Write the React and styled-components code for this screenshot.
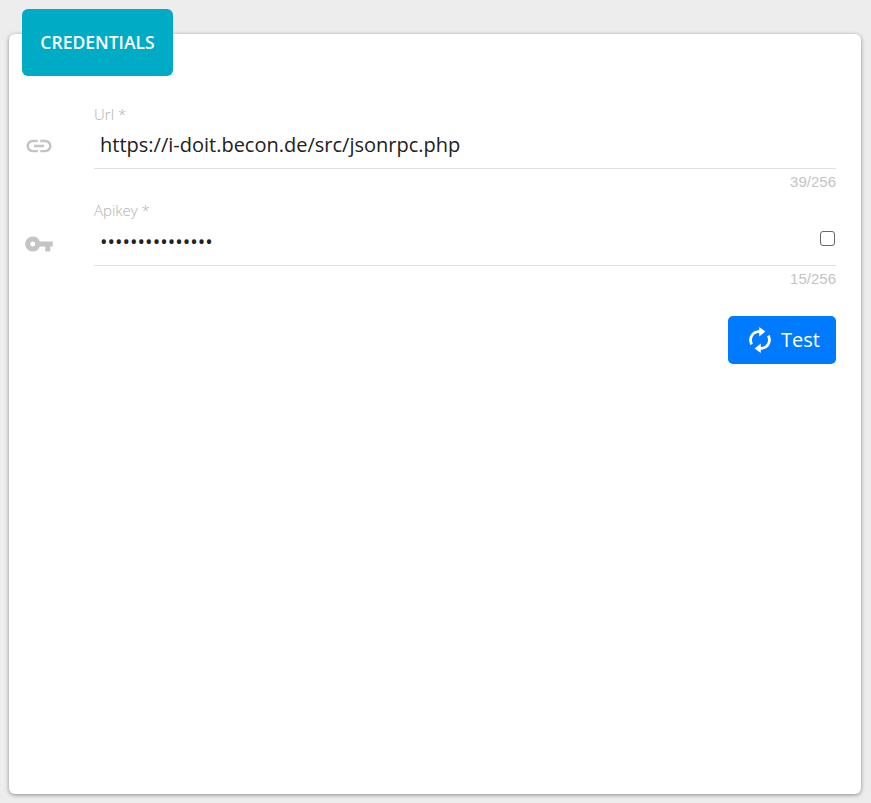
import React from "react";
import styled, { createGlobalStyle } from "styled-components";
import { MdLink, MdVpnKey } from "react-icons/md";

const GlobalStyle = createGlobalStyle`
  *, *::before, *::after { box-sizing: border-box; }
  body {
    margin: 0;
    background: #ededed;
    font-family: "Open Sans", sans-serif;
    color: #212121;
  }
`;

const Page = styled.main`
  height: 803px;
  padding: 34px 10px 9px 9px;
  overflow: hidden;
`;

const Card = styled.section`
  height: 760px;
  padding: 0 25px 0 13px;
  background: #fff;
  border-radius: 6px;
  box-shadow: 0 1px 4px rgba(0, 0, 0, 0.42);
`;

const CardTitle = styled.h2`
  display: flex;
  align-items: center;
  justify-content: center;
  width: 151px;
  height: 67px;
  margin: 0;
  padding-bottom: 2px;
  transform: translateY(-25px);
  background: #00acc5;
  border-radius: 6px;
  color: #fff;
  font-size: 17.5px;
  font-weight: 600;
  letter-spacing: 0;
`;

const Form = styled.form`
  display: flex;
  flex-direction: column;
  padding-top: 2px;
`;

const FieldRow = styled.div`
  display: grid;
  grid-template-columns: 72px 1fr;
  height: 97px;
`;

const FieldIcon = styled.div`
  padding: ${(p) => p.$top}px 0 0 2px;
  color: #c4c4c4;
  font-size: 30px;
  line-height: 0;
`;

const FieldBody = styled.div`
  display: flex;
  flex-direction: column;
`;

const Label = styled.label`
  height: 20px;
  color: #b0b0b0;
  font-size: 15px;
  font-weight: 300;
  line-height: ${(p) => p.$line}px;
`;

const InputLine = styled.div`
  display: flex;
  justify-content: space-between;
  height: 46px;
  padding: 0 1px 0 6px;
  border-bottom: 1px solid #e1e1e1;
  font-size: 20px;
  line-height: 44px;
`;

const Value = styled.span`
  display: block;
`;

const RevealBox = styled.input`
  appearance: none;
  width: 15px;
  height: 15px;
  margin: 11px 0 0;
  background: #fff;
  border: 1px solid #686868;
  border-radius: 3px;
`;

const Counter = styled.span`
  align-self: flex-end;
  padding-top: 4px;
  color: #c4c4c4;
  font-family: "Liberation Sans", sans-serif;
  font-size: 15px;
  line-height: 18px;
`;

const TestButton = styled.button`
  display: flex;
  align-items: center;
  align-self: flex-end;
  gap: 6px;
  width: 108px;
  height: 48px;
  margin-top: 19px;
  padding: 0 0 0 17px;
  border: 0;
  border-radius: 5px;
  background: #007bff;
  color: #fff;
  font-family: inherit;
  font-size: 20px;
`;

const ButtonText = styled.span`
  line-height: 26px;
`;

const RefreshIcon = () => (
  <svg width="30" height="30" viewBox="0 0 30 30" fill="none" aria-hidden="true">
    <path
      d="M6.6 19.4C3.8 13 7.2 7.2 13.5 6.6H15.5M23.4 10.6C26.2 17 22.8 22.8 16.5 23.4H14.5"
      stroke="#fff"
      strokeWidth="2.8"
    />
    <path d="M14.2 2l6.2 4.6-6.2 4.8zM15.8 28l-6.2-4.6 6.2-4.8z" fill="#fff" />
  </svg>
);

export default function App() {
  return (
    <>
      <GlobalStyle />
      <Page>
        <Card>
          <CardTitle>CREDENTIALS</CardTitle>
          <Form>
            <FieldRow>
              <FieldIcon $top={28}>
                <MdLink />
              </FieldIcon>
              <FieldBody>
                <Label $line={22}>Url *</Label>
                <InputLine>
                  <Value>https://i-doit.becon.de/src/jsonrpc.php</Value>
                </InputLine>
                <Counter>39/256</Counter>
              </FieldBody>
            </FieldRow>
            <FieldRow>
              <FieldIcon $top={29}>
                <MdVpnKey />
              </FieldIcon>
              <FieldBody>
                <Label $line={20}>Apikey *</Label>
                <InputLine>
                  <Value>{"•".repeat(15)}</Value>
                  <RevealBox type="checkbox" aria-label="Show key" />
                </InputLine>
                <Counter>15/256</Counter>
              </FieldBody>
            </FieldRow>
            <TestButton type="button">
              <RefreshIcon />
              <ButtonText>Test</ButtonText>
            </TestButton>
          </Form>
        </Card>
      </Page>
    </>
  );
}
